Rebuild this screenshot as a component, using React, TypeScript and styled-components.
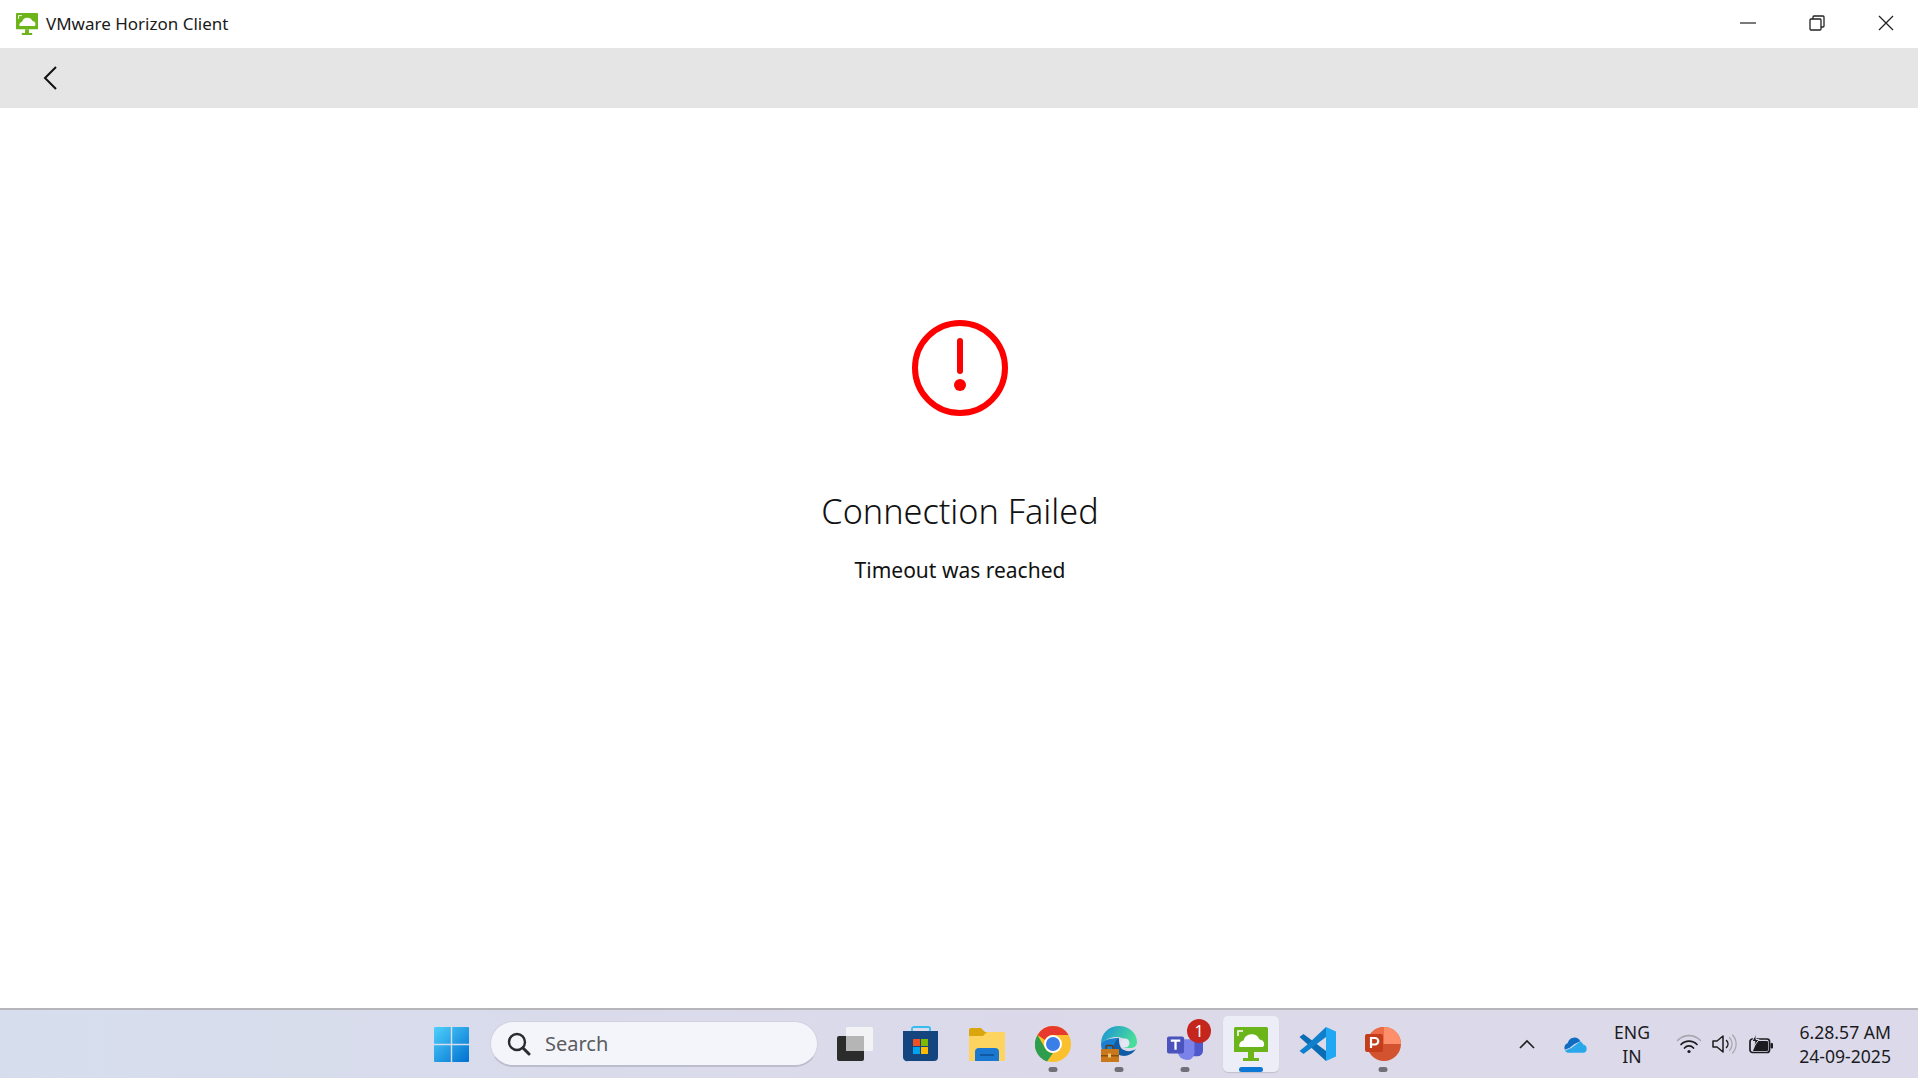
import React from "react";
import styled, { createGlobalStyle } from "styled-components";

const Global = createGlobalStyle`
  html, body { margin: 0; padding: 0; height: 100%; background: #fff; overflow: hidden; }
  #root { height: 100%; }
  * { box-sizing: border-box; }
`;
const FONT = `"Noto Sans", "Open Sans", "Liberation Sans", sans-serif`;

const Page = styled.div`
  height: 100vh; display: flex; flex-direction: column; font-family: ${FONT}; color: #111; background: #fff;
`;
const TitleBar = styled.header`
  height: 48px; flex: none; display: flex; align-items: center; padding-left: 16px; gap: 8px; background: #fff;
`;
const AppTitle = styled.span`
  font-size: 17px; color: #1a1a1a; flex: 1; padding-bottom: 2px;
`;
const WindowButtons = styled.div`
  display: flex; height: 100%;
`;
const WindowButton = styled.button`
  width: 69px; height: 48px; border: 0; background: none; padding: 0 0 2px 4px; display: flex; align-items: center; justify-content: center;
`;
const NavBar = styled.nav`
  height: 60px; flex: none; background: #e5e5e5; display: flex; align-items: center; padding-left: 42px;
`;
const BackButton = styled.button`
  border: 0; background: none; padding: 0; display: flex; width: 18px; height: 26px;
`;
const Main = styled.main`
  flex: 1; min-height: 0; display: flex; flex-direction: column; align-items: center; padding: 212px 0 0 2px;
`;
const Heading = styled.h1`
  margin: 71px 0 0; font-size: 34.2px; font-weight: 300; line-height: 48px; color: #111; white-space: nowrap;
`;
const Message = styled.p`
  margin: 21px 0 0; font-size: 21px; font-weight: 400; line-height: 28px; color: #111; white-space: nowrap;
`;
const Taskbar = styled.footer`
  height: 70px; flex: none; border-top: 2px solid #b5b5ba; display: flex; align-items: center; padding-left: 418px; padding-right: 27px;
  background: linear-gradient(90deg, #d6deed 0%, #d9dbeb 30%, #dcd9e9 60%, #dcdaea 100%);
`;
const Slot = styled.div<{ $active?: boolean }>`
  width: 66px; height: 56px; flex: none; display: flex; align-items: center; justify-content: center; position: relative;
  &::before {
    content: ""; position: absolute; left: 5px; right: 5px; top: 0; bottom: 0; border-radius: 5px;
    background: ${(p) => (p.$active ? "#ecedf6" : "transparent")};
    box-shadow: ${(p) => (p.$active ? "0 1px 1px rgba(0,0,0,.12)" : "none")};
  }
  & > svg { position: relative; }
`;
const Dot = styled.span<{ $active?: boolean }>`
  position: absolute; bottom: 0; left: 50%; transform: translateX(-50%); height: 5px; border-radius: 3px;
  width: ${(p) => (p.$active ? "24px" : "9px")};
  background: ${(p) => (p.$active ? "#0a78d4" : "#6f6f78")};
`;
const Badge = styled.span`
  position: absolute; top: 3px; left: 35px; width: 24px; height: 24px; border-radius: 50%; background: #c4261d; color: #fff;
  font-size: 16px; display: flex; align-items: center; justify-content: center;
`;
const SearchBox = styled.div`
  width: 328px; height: 46px; margin: 0 4px 0 6px; flex: none; border-radius: 23px; background: #f4f5fb; display: flex; align-items: center;
  padding-left: 16px; gap: 14px; border: 1px solid #d0d1e0; border-bottom: 2px solid #bcbdcd;
`;
const SearchText = styled.span`
  font-size: 20px; color: #5b5b5f;
`;
const Tray = styled.div`
  margin-left: auto; display: flex; align-items: center; color: #1b1b1f;
`;
const TrayIcon = styled.div<{ $w: number }>`
  width: ${(p) => p.$w}px; display: flex; justify-content: center; align-items: center; flex: none;
`;
const LangBox = styled.div`
  width: 78px; text-align: center; font-size: 17.6px; line-height: 24px; flex: none;
`;
const Clock = styled.div`
  width: 110px; text-align: right; font-size: 17.6px; line-height: 24px; flex: none; white-space: nowrap;
`;

const HorizonLogo = ({ size }: { size: number }) => (
  <svg width={size} height={size} viewBox="0 0 34 34">
    <path d="M1.500 0h31A1.500 1.500 0 0 1 34 1.500V25H0V1.500A1.500 1.500 0 0 1 1.500 0z" fill="#6bb51a" />
    <path d="M5.500 20a5 5 0 0 1 4-6.500a8.500 8.500 0 0 1 16-1a4.500 4.500 0 0 1 3.500 7.500z" fill="#fff" />
    <path d="M4 9V4h5" fill="none" stroke="#fff" strokeWidth="1.500" />
    <path d="M14 25h6v6h5v3H9v-3h5z" fill="#6bb51a" />
  </svg>
);

const WindowsLogo = () => (
  <svg width="35" height="35" viewBox="0 0 35 35">
    <defs>
      <linearGradient id="win" x1="0" y1="0" x2="1" y2="1">
        <stop offset="0" stopColor="#4fd0fb" />
        <stop offset="1" stopColor="#0070d0" />
      </linearGradient>
    </defs>
    <path d="M1 0h15.800v16.800H0V1a1 1 0 0 1 1-1zM18.200 0H34a1 1 0 0 1 1 1v15.800H18.200zM0 18.200h16.800V35H1a1 1 0 0 1-1-1zM18.200 18.200H35V34a1 1 0 0 1-1 1H18.200z" fill="url(#win)" />
  </svg>
);
const SearchIcon = () => (
  <svg width="24" height="24" viewBox="0 0 24 24" fill="none" stroke="#2b2b2f" strokeWidth="2.400" strokeLinecap="round">
    <circle cx="10" cy="10" r="8" />
    <path d="M16 16l6 6" strokeWidth="3" />
  </svg>
);
const TaskViewIcon = () => (
  <svg width="36" height="34" viewBox="0 0 36 34">
    <rect x="0" y="9" width="27" height="25" rx="2" fill="#2d2c2c" />
    <rect x="9" y="0" width="27" height="24" rx="1.500" fill="#f3f3f5" />
    <rect x="9" y="9" width="18" height="15" fill="#b5b5b5" />
  </svg>
);
const StoreIcon = () => (
  <svg width="36" height="36" viewBox="0 0 36 36">
    <path d="M9 6V2.500C9 1.500 10 1 11 1h14c1 0 2 .5 2 1.500V6" fill="none" stroke="#35bdf0" strokeWidth="1.800" />
    <path d="M0 5h35v26a4 4 0 0 1-4 4H5a4 4 0 0 1-5-4z" fill="#14457f" />
    <rect x="10" y="13" width="7" height="7" fill="#f25022" />
    <rect x="18" y="13" width="7" height="7" fill="#7fba00" />
    <rect x="10" y="21" width="7" height="7" fill="#00a4ef" />
    <rect x="18" y="21" width="7" height="7" fill="#ffb900" />
  </svg>
);
const FolderIcon = () => (
  <svg width="36" height="33" viewBox="0 0 36 33">
    <path d="M0 2a2 2 0 0 1 2-2h10l4 4h20v6H0z" fill="#dba60d" />
    <path d="M0 8h14l4-4h18v29H0z" fill="#fdd460" />
    <path d="M6 33v-9a4 4 0 0 1 4-4h16a4 4 0 0 1 4 4v9z" fill="#1a78d0" />
    <path d="M11 27h14" stroke="#0d4f94" strokeWidth="1.500" />
  </svg>
);
const ChromeIcon = () => (
  <svg width="36" height="36" viewBox="0 0 36 36">
    <circle cx="18" cy="18" r="18" fill="#fbc02d" />
    <path d="M18 0a18 18 0 0 1 15.600 9H18a9 9 0 0 0-8 5L2.500 9A18 18 0 0 1 18 0z" fill="#e8392f" />
    <path d="M2.500 9L10 22a9 9 0 0 0 8 5l-6 8.500A18 18 0 0 1 2.500 9z" fill="#2d9e4d" />
    <circle cx="18" cy="18" r="9" fill="#fff" />
    <circle cx="18" cy="18" r="7" fill="#3a7ee8" />
  </svg>
);
const EdgeIcon = () => (
  <svg width="36" height="36" viewBox="0 0 36 36">
    <defs>
      <linearGradient id="edge" x1="0" y1="0" x2="1" y2="0.4">
        <stop offset="0" stopColor="#1a8fd8" />
        <stop offset="1" stopColor="#48dd9a" />
      </linearGradient>
    </defs>
    <path d="M0 18C0 7 8 0 18 0c10 0 18 7 18 16 0 4-3 6-7 6h-6c3-3 3-9-2-10C14 9.500 6 12 0 18z" fill="url(#edge)" />
    <path d="M18 12a7 7 0 0 0-5 12c3 6 14 10 22-1-5 3-11 3-15-1-2-3-2-7-2-10z" fill="#0e5ca6" />
    <path d="M18 12C10 12 2 14 0 18c0 5 2 8 4 11h10c-3-5-2-13 4-17z" fill="#1a7fd0" />
    <circle cx="24" cy="17" r="4.500" fill="#e4e6f2" />
    <path d="M5 24v-3a1.500 1.500 0 0 1 1.500-1.500h4A1.500 1.500 0 0 1 12 21v3" fill="none" stroke="#5a3a14" strokeWidth="1.500" />
    <rect x="0" y="23" width="18" height="13" fill="#c9781b" />
    <rect x="0" y="29" width="18" height="1.500" fill="#8a4f10" />
    <rect x="7" y="27.500" width="3" height="4" fill="#f2c66b" />
  </svg>
);
const TeamsIcon = () => (
  <svg width="36" height="34" viewBox="0 0 38 34">
    <circle cx="28" cy="7" r="5" fill="#7b83eb" />
    <path d="M24 12h12a2 2 0 0 1 2 2v10a6 6 0 0 1-6 6h-8z" fill="#5059c9" />
    <path d="M11 12h18v14a8 8 0 0 1-8 8 10 10 0 0 1-10-10z" fill="#7b83eb" />
    <rect x="0" y="9" width="18" height="18" rx="2" fill="#4b53bc" />
    <path d="M4 13.500h10M9 13.500V23" stroke="#fff" strokeWidth="2.400" />
  </svg>
);
const VSCodeIcon = () => (
  <svg width="37" height="36" viewBox="0 0 37 36">
    <path d="M0.500 11L4.500 8 27 25v10z" fill="#0a6cb3" />
    <path d="M27 1v10L4.500 28 0.500 25 9 18z" fill="#0f80cc" />
    <path d="M27 1l10 4.500v25L27 35z" fill="#22a7f2" />
  </svg>
);
const PowerPointIcon = () => (
  <svg width="36" height="36" viewBox="0 0 36 36">
    <circle cx="19" cy="18" r="17" fill="#d35230" />
    <path d="M19 1a17 17 0 0 1 17 17H19z" fill="#ff8f6b" />
    <path d="M2 18A17 17 0 0 1 19 1v17z" fill="#ed6c47" />
    <rect x="0" y="8" width="18" height="18" rx="2" fill="#c43e1c" />
    <path d="M6 22V12h4a3 3 0 0 1 0 6.500H6" fill="none" stroke="#fff" strokeWidth="2.200" />
  </svg>
);

const Chevron = () => (
  <svg width="16" height="10" viewBox="0 0 16 10" fill="none" stroke="#222" strokeWidth="1.700">
    <path d="M1 9l7-7 7 7" />
  </svg>
);
const OneDrive = () => (
  <svg width="25" height="17" viewBox="0 0 26 17">
    <path d="M5 7a7 7 0 0 1 13-2L12 8l-5 4-5 2a5 5 0 0 1 3-7z" fill="#0e6dc0" />
    <path d="M5 17a4.500 4.500 0 0 1-3-2l7-3 9-7a6 6 0 0 1 3 3.500A4.500 4.500 0 0 1 22 17z" fill="#28a8ea" />
  </svg>
);
const Wifi = () => (
  <svg width="26" height="20" viewBox="0 0 26 20" fill="none" strokeLinecap="round">
    <path d="M1.500 6.500a16 16 0 0 1 23 0" stroke="#a8a8b0" strokeWidth="1.600" />
    <path d="M5 10.500a11 11 0 0 1 16 0" stroke="#1c1c20" strokeWidth="1.700" />
    <path d="M8.500 14a6 6 0 0 1 9 0" stroke="#1c1c20" strokeWidth="1.700" />
    <circle cx="13" cy="17.500" r="1.600" fill="#1c1c20" />
  </svg>
);
const Speaker = () => (
  <svg width="25" height="22" viewBox="0 0 25 22" fill="none" strokeLinecap="round" strokeLinejoin="round">
    <path d="M1 8v6h4l6 5V3L5 8z" stroke="#1c1c20" strokeWidth="1.500" />
    <path d="M14.500 7.500a5 5 0 0 1 0 7" stroke="#1c1c20" strokeWidth="1.500" />
    <path d="M17.500 4.500a9.500 9.500 0 0 1 0 13M20.500 2a13 13 0 0 1 0 18" stroke="#a8a8b0" strokeWidth="1.300" />
  </svg>
);
const Battery = () => (
  <svg width="24" height="20" viewBox="0 0 24 20">
    <rect x="1" y="5" width="19.500" height="13.500" rx="2.500" fill="none" stroke="#1c1c20" strokeWidth="1.700" />
    <path d="M8 7h10a1 1 0 0 1 1 1v8a1 1 0 0 1-1 1H4z" fill="#1c1c20" />
    <rect x="21.500" y="9" width="2.500" height="5.500" rx="1" fill="#1c1c20" />
    <path d="M7 0L3 7.500h3L4.500 13 10 5.500H7z" fill="#1c1c20" stroke="#dcdaea" strokeWidth="1" />
  </svg>
);

const AlertIcon = () => (
  <svg width="96" height="96" viewBox="0 0 96 96" fill="none">
    <circle cx="48" cy="48" r="45" stroke="#ff0000" strokeWidth="6" />
    <path d="M48 21v30" stroke="#ff0000" strokeWidth="6" strokeLinecap="round" />
    <circle cx="48" cy="65" r="6" fill="#ff0000" />
  </svg>
);

export default function App() {
  return (
    <Page>
      <Global />
      <TitleBar>
        <HorizonLogo size={22} />
        <AppTitle>VMware Horizon Client</AppTitle>
        <WindowButtons>
          <WindowButton aria-label="Minimize">
            <svg width="16" height="2" viewBox="0 0 16 2"><path d="M0 1h16" stroke="#222" strokeWidth="1.200" /></svg>
          </WindowButton>
          <WindowButton aria-label="Restore">
            <svg width="16" height="16" viewBox="0 0 16 16" fill="none" stroke="#222" strokeWidth="1.300">
              <rect x="1" y="4" width="11" height="11" rx="1" />
              <path d="M4 4V2a1 1 0 0 1 1-1h9a1 1 0 0 1 1 1v9a1 1 0 0 1-1 1h-2" />
            </svg>
          </WindowButton>
          <WindowButton aria-label="Close">
            <svg width="16" height="16" viewBox="0 0 16 16" fill="none" stroke="#222" strokeWidth="1.300"><path d="M1 1l14 14M15 1L1 15" /></svg>
          </WindowButton>
        </WindowButtons>
      </TitleBar>
      <NavBar>
        <BackButton aria-label="Back">
          <svg width="18" height="26" viewBox="0 0 18 26" fill="none" stroke="#111" strokeWidth="2"><path d="M14 2L3 13l11 11" /></svg>
        </BackButton>
      </NavBar>
      <Main>
        <AlertIcon />
        <Heading>Connection Failed</Heading>
        <Message>Timeout was reached</Message>
      </Main>
      <Taskbar>
        <Slot><WindowsLogo /></Slot>
        <SearchBox><SearchIcon /><SearchText>Search</SearchText></SearchBox>
        <Slot><TaskViewIcon /></Slot>
        <Slot><StoreIcon /></Slot>
        <Slot><FolderIcon /></Slot>
        <Slot><ChromeIcon /><Dot /></Slot>
        <Slot><EdgeIcon /><Dot /></Slot>
        <Slot><TeamsIcon /><Badge>1</Badge><Dot /></Slot>
        <Slot $active><HorizonLogo size={34} /><Dot $active /></Slot>
        <Slot><VSCodeIcon /></Slot>
        <Slot><PowerPointIcon /><Dot /></Slot>
        <Tray>
          <TrayIcon $w={60}><Chevron /></TrayIcon>
          <TrayIcon $w={36}><OneDrive /></TrayIcon>
          <LangBox>ENG<br />IN</LangBox>
          <TrayIcon $w={36}><Wifi /></TrayIcon>
          <TrayIcon $w={34}><Speaker /></TrayIcon>
          <TrayIcon $w={40}><Battery /></TrayIcon>
          <Clock>6.28.57 AM<br />24-09-2025</Clock>
        </Tray>
      </Taskbar>
    </Page>
  );
}
